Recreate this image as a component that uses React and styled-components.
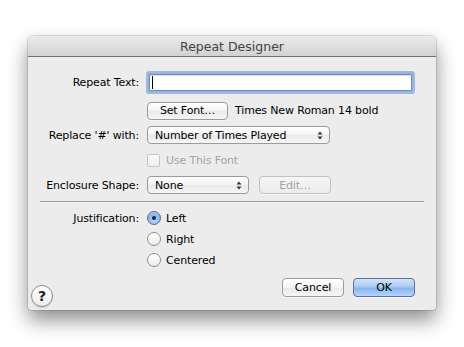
import React from 'react'
import styled, { createGlobalStyle } from 'styled-components'

const GlobalStyle = createGlobalStyle`
  html, body {
    margin: 0;
    padding: 0;
    background: #ffffff;
  }
  body {
    font-family: "DejaVu Sans", "Noto Sans", sans-serif;
    font-size: 11px;
    letter-spacing: -0.15px;
    color: #000;
  }
`

const Page = styled.div`
  padding: 36px 28px 0 28px;
  width: 464px;
  height: 347px;
  box-sizing: border-box;
`

const Window = styled.div`
  width: 408px;
  height: 274px;
  background: #ececec;
  border-radius: 5px 5px 4px 4px;
  box-shadow: 0 10px 20px rgba(0, 0, 0, 0.45), 0 0 0 1px rgba(0, 0, 0, 0.12);
  display: flex;
  flex-direction: column;
  overflow: hidden;
`

const TitleBar = styled.div`
  height: 20px;
  flex: none;
  display: flex;
  align-items: center;
  justify-content: center;
  background: linear-gradient(#ebebeb, #d2d2d2);
  border-bottom: 1px solid #6f6f6f;
  color: #444;
  font-size: 12.5px;
  letter-spacing: 0;
`

const Body = styled.div`
  flex: 1;
  display: flex;
  flex-direction: column;
  padding: 0 12px 0 12px;
`

const Row = styled.div`
  display: grid;
  grid-template-columns: 99px 1fr;
  column-gap: 7px;
  align-items: center;
  height: ${p => p.h}px;
  margin-top: ${p => p.mt}px;
`

const Label = styled.div`
  text-align: right;
  white-space: nowrap;
`

const Controls = styled.div`
  display: flex;
  align-items: center;
  gap: ${p => p.gap || 0}px;
`

const TextField = styled.div`
  height: 15px;
  margin: 0 12px 0 3px;
  flex: 1;
  background: #fff;
  border: 1px solid #7a8ea8;
  box-shadow: 0 0 0 1px #8fb2e3, 0 0 0 3px rgba(128, 168, 226, 0.75), inset 0 1px 1px rgba(0, 0, 0, 0.15);
  border-radius: 1px;
  display: flex;
  align-items: center;
  padding-left: 2px;
`

const Caret = styled.span`
  width: 1px;
  height: 13px;
  background: #000;
`

const Button = styled.div`
  box-sizing: border-box;
  width: ${p => p.w}px;
  height: ${p => p.h || 18}px;
  margin-left: ${p => p.ml || 0}px;
  display: flex;
  align-items: center;
  justify-content: center;
  border-radius: 4px;
  border: 1px solid ${p => (p.primary ? '#5e6d9e' : p.disabled ? '#c2c2c2' : '#9b9b9b')};
  background: ${p =>
    p.primary
      ? 'linear-gradient(#d3e5fa, #a9cbf3 45%, #86b6ee 55%, #b5d6fa)'
      : p.disabled
        ? 'linear-gradient(#f6f6f6, #ececec)'
        : 'linear-gradient(#ffffff, #f3f3f3 50%, #e9e9e9 51%, #f6f6f6)'};
  color: ${p => (p.disabled ? '#a3a3a3' : '#000')};
  box-shadow: 0 1px 0 rgba(255, 255, 255, 0.6);
  white-space: nowrap;
`

const Info = styled.span`
  margin-left: 7px;
  white-space: nowrap;
`

const Popup = styled.div`
  box-sizing: border-box;
  width: ${p => p.w}px;
  height: 18px;
  margin-left: 1px;
  display: flex;
  align-items: center;
  justify-content: space-between;
  padding: 0 6px 0 7px;
  border-radius: 4px;
  border: 1px solid #9b9b9b;
  background: linear-gradient(#ffffff, #f3f3f3 50%, #e9e9e9 51%, #f6f6f6);
  white-space: nowrap;
`

const Check = styled.div`
  display: flex;
  align-items: center;
  gap: 6px;
  margin-left: 1px;
  color: ${p => (p.disabled ? '#a3a3a3' : '#000')};
`

const CheckBox = styled.span`
  box-sizing: border-box;
  width: 13px;
  height: 13px;
  border-radius: 2px;
  border: 1px solid #c6c6c6;
  background: linear-gradient(#fbfbfb, #f0f0f0);
`

const Separator = styled.div`
  height: 1px;
  background: #9a9a9a;
  border-bottom: 1px solid #f8f8f8;
  margin-top: 7px;
`

const Radio = styled.div`
  display: flex;
  align-items: center;
  gap: 5px;
  margin-left: 1px;
`

const RadioDot = styled.span`
  box-sizing: border-box;
  width: 14px;
  height: 14px;
  border-radius: 50%;
  border: 1px solid ${p => (p.on ? '#5a6b8f' : '#8f8f8f')};
  background: ${p =>
    p.on
      ? 'radial-gradient(circle at 50% 70%, #b9d6f8, #86b4ea 60%, #d8e8fb)'
      : 'linear-gradient(#ffffff, #ececec)'};
  display: flex;
  align-items: center;
  justify-content: center;
  &::after {
    content: '';
    display: ${p => (p.on ? 'block' : 'none')};
    width: 4px;
    height: 4px;
    border-radius: 50%;
    background: #1e2530;
  }
`

const Footer = styled.div`
  display: flex;
  align-items: flex-end;
  margin-top: auto;
  margin-bottom: 3px;
  margin-left: -9px;
  padding-right: 9px;
`

const FooterButtons = styled.div`
  display: flex;
  gap: 9px;
  margin-bottom: 10px;
`

const HelpButton = styled.div`
  box-sizing: border-box;
  width: 22px;
  height: 22px;
  border-radius: 50%;
  border: 1px solid #8c8c8c;
  background: linear-gradient(#ffffff, #ececec);
  box-shadow: 0 1px 1px rgba(0, 0, 0, 0.15);
  display: flex;
  align-items: center;
  justify-content: center;
  font-weight: bold;
  font-size: 14px;
  color: #222;
`

const Spacer = styled.div`
  flex: 1;
`

function Arrows () {
  return (
    <svg width='6' height='9' viewBox='0 0 6 9'>
      <path d='M3 0.5 L5.5 3.5 L0.5 3.5 Z' fill='#333' />
      <path d='M0.5 5.5 L5.5 5.5 L3 8.5 Z' fill='#333' />
    </svg>
  )
}

export default function App () {
  return (
    <Page>
      <GlobalStyle />
      <Window>
        <TitleBar>Repeat Designer</TitleBar>
        <Body>
          <Row h={21} mt={15}>
            <Label>Repeat Text:</Label>
            <Controls>
              <TextField><Caret /></TextField>
            </Controls>
          </Row>
          <Row h={19} mt={8}>
            <span />
            <Controls>
              <Button w={81} ml={1}>Set Font…</Button>
              <Info>Times New Roman 14 bold</Info>
            </Controls>
          </Row>
          <Row h={18} mt={6}>
            <Label>Replace '#' with:</Label>
            <Controls>
              <Popup w={183}>Number of Times Played<Arrows /></Popup>
            </Controls>
          </Row>
          <Row h={16} mt={8}>
            <span />
            <Controls>
              <Check disabled><CheckBox />Use This Font</Check>
            </Controls>
          </Row>
          <Row h={18} mt={8}>
            <Label>Enclosure Shape:</Label>
            <Controls gap={10}>
              <Popup w={102}>None<Arrows /></Popup>
              <Button w={72} disabled>Edit…</Button>
            </Controls>
          </Row>
          <Separator />
          <Row h={16} mt={7}>
            <Label>Justification:</Label>
            <Radio><RadioDot on />Left</Radio>
          </Row>
          <Row h={16} mt={5}>
            <span />
            <Radio><RadioDot />Right</Radio>
          </Row>
          <Row h={16} mt={5}>
            <span />
            <Radio><RadioDot />Centered</Radio>
          </Row>
          <Footer>
            <HelpButton>?</HelpButton>
            <Spacer />
            <FooterButtons>
              <Button w={62} h={19}>Cancel</Button>
              <Button w={62} h={19} primary>OK</Button>
            </FooterButtons>
          </Footer>
        </Body>
      </Window>
    </Page>
  )
}
